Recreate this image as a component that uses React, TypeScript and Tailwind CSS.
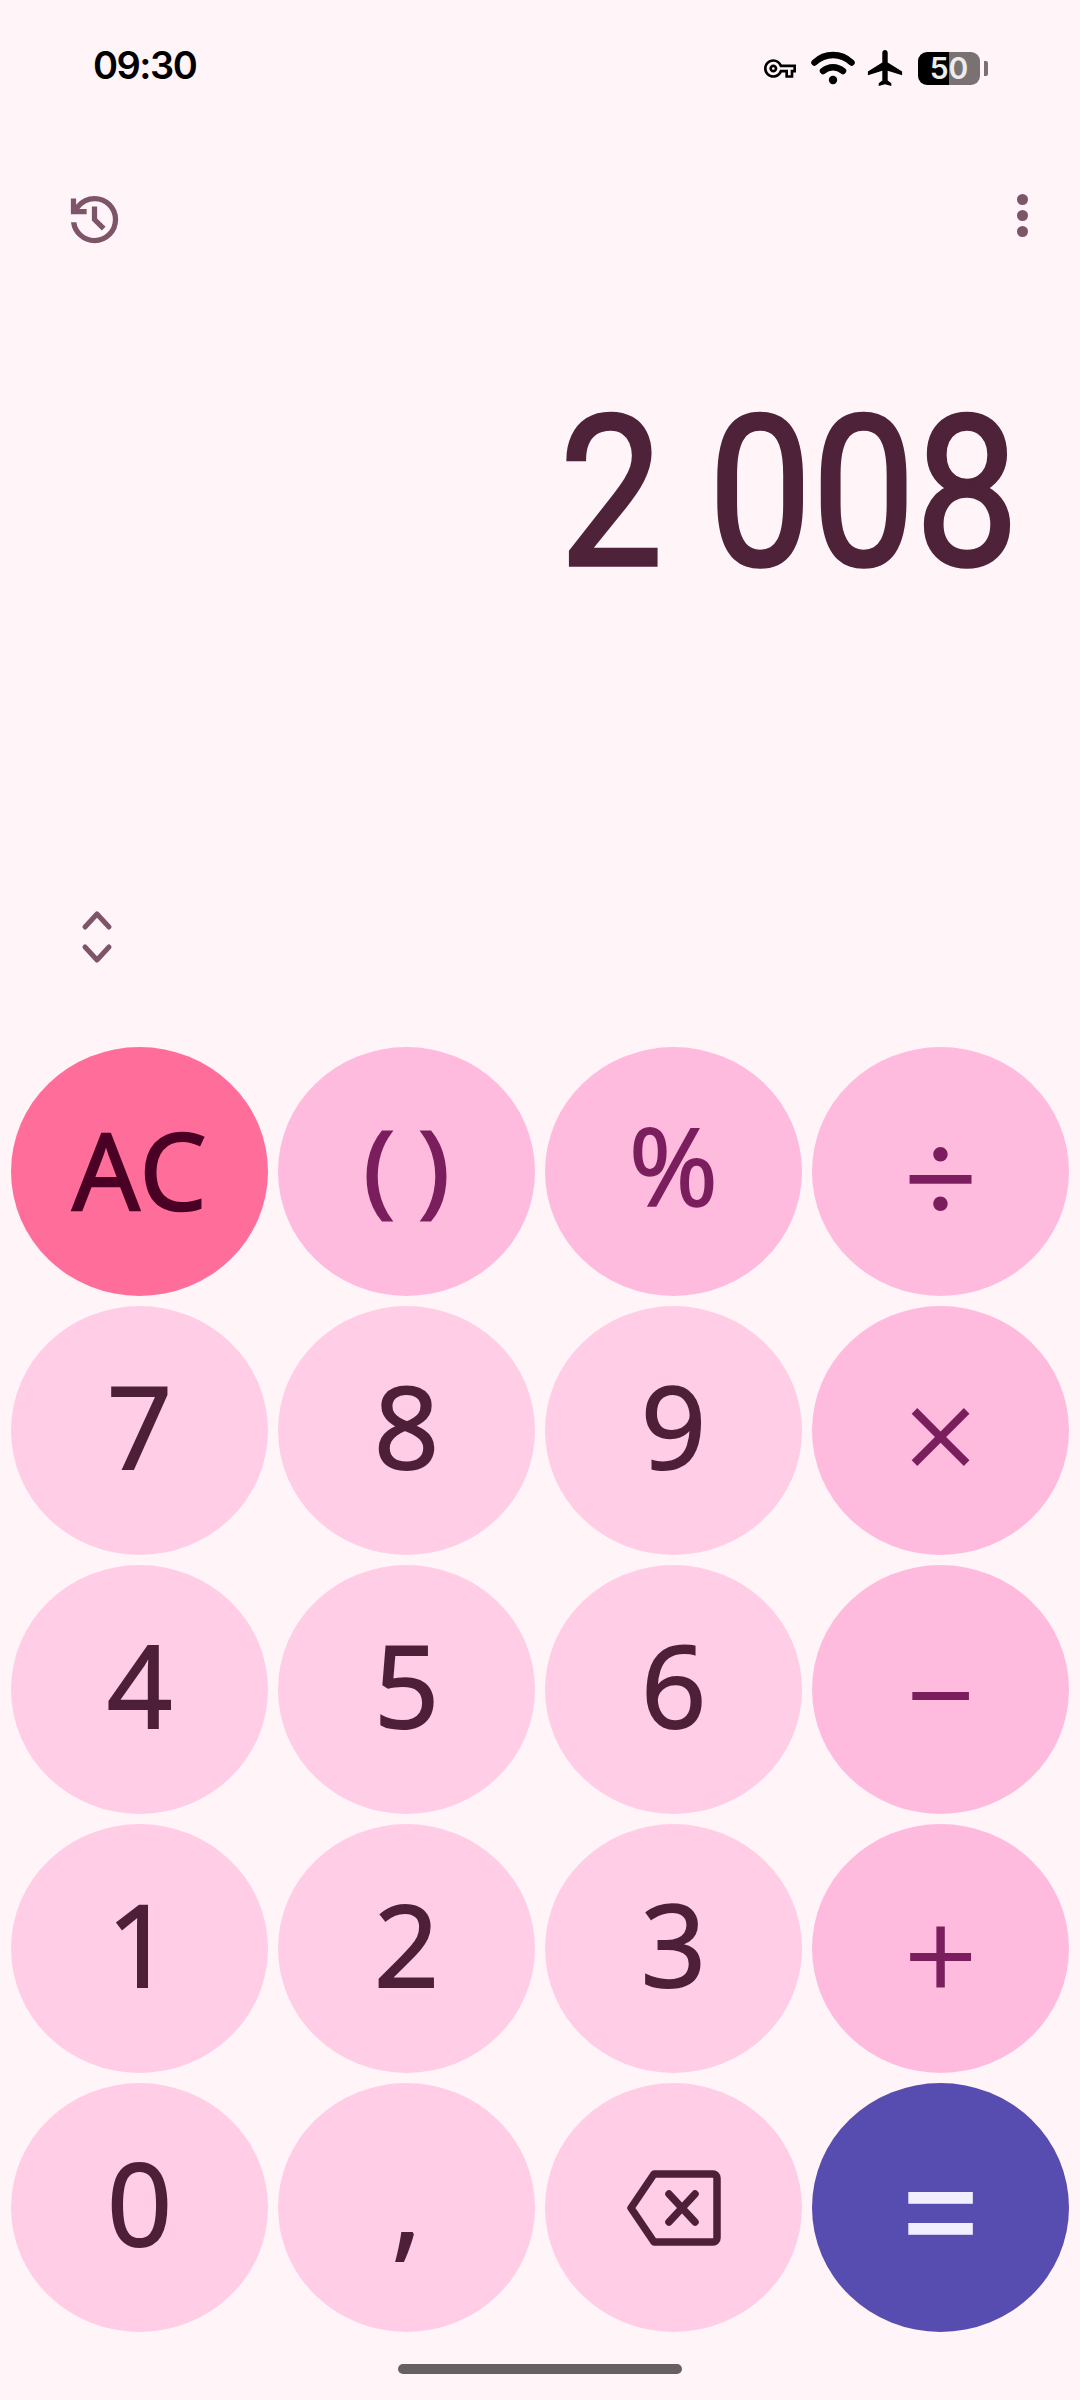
import React from "react";

const digit = "bg-[#FFCEE6] text-[#4E1F38] text-[114px] font-['Open_Sans',sans-serif] pb-[12px] [-webkit-text-stroke:2px_#4E1F38]";
const opBase = "bg-[#FFBBDD] text-[#7B1E5E] font-['Inter',sans-serif] font-[350]";
const sym = "bg-[#FFBBDD] text-[#7B1E5E] font-['Open_Sans',sans-serif] pb-[14px]";

type K = { t: string; c: string };
const keys: K[] = [
  { t: "AC", c: "bg-[#FF6E9B] text-[#4A0024] text-[106px] font-['Open_Sans',sans-serif] pb-[6px] [-webkit-text-stroke:2.5px_#4A0024]" },
  { t: "( )", c: `${sym} text-[100px] [-webkit-text-stroke:3px_#7B1E5E]` },
  { t: "%", c: `${sym} text-[108px] [-webkit-text-stroke:1.5px_#7B1E5E]` },
  { t: "÷", c: `${opBase} text-[140px] pb-[8px]` },
  { t: "7", c: digit },
  { t: "8", c: digit },
  { t: "9", c: digit },
  { t: "×", c: `${opBase} text-[130px] pb-[8px]` },
  { t: "4", c: digit },
  { t: "5", c: digit },
  { t: "6", c: digit },
  { t: "−", c: `${opBase} text-[128px] pb-[8px]` },
  { t: "1", c: digit },
  { t: "2", c: digit },
  { t: "3", c: digit },
  { t: "+", c: `${opBase} text-[135px] pb-[4px]` },
  { t: "0", c: digit },
  { t: ",", c: digit },
  { t: "⌫", c: digit },
  { t: "=", c: "bg-[#574DB0] text-[#F0EEFF] text-[146px] font-['Inter',sans-serif] font-normal pb-[12px]" },
];

function Backspace() {
  return (
    <svg className="mt-[12px]" width="94" height="76" viewBox="0 0 94 76" fill="none" stroke="#4E1F38" strokeWidth="7.5" strokeLinecap="round" strokeLinejoin="round" aria-label="backspace">
      <path d="M27 4H86a4 4 0 0 1 4 4V68a4 4 0 0 1-4 4H27L4 38Z" />
      <path d="M42 24L68 52M68 24L42 52" />
    </svg>
  );
}

export default function App() {
  return (
    <div className="flex h-[2400px] w-[1080px] flex-col overflow-hidden bg-[#FFF4F8] font-['Inter',sans-serif]">
      {/* status bar */}
      <div className="flex h-[187px] items-start justify-between pl-[93px] pr-[92px] pt-[46px]">
        <span className="text-[38px] font-semibold leading-[38px] tracking-[-1.5px] text-black">09:30</span>
        <div className="flex items-center pt-[4px]">
          <svg width="32" height="19" viewBox="0 5 24 14" fill="#000">
            <path d="M22 19h-6v-4h-2.68c-1.14 2.42-3.6 4-6.32 4-3.86 0-7-3.14-7-7s3.14-7 7-7c2.72 0 5.17 1.58 6.32 4H24v6h-2v4zm-4-2h2v-4h2v-2H11.94l-.23-.67C11.01 8.34 9.11 7 7 7c-2.76 0-5 2.24-5 5s2.24 5 5 5c2.11 0 4.01-1.34 4.71-3.33l.23-.67H18v4zM7 15c-1.65 0-3-1.35-3-3s1.35-3 3-3 3 1.35 3 3-1.35 3-3 3zm0-4c-.55 0-1 .45-1 1s.45 1 1 1 1-.45 1-1-.45-1-1-1z" />
          </svg>
          <svg className="ml-[15px]" width="44" height="34" viewBox="0 0 44 34" fill="none" stroke="#000" strokeLinecap="round" strokeWidth="6.5">
            <path d="M3.5 11.5C14 1.5 30 1.5 40.5 11.5" />
            <path d="M12 20C18 15 26 15 32 20" />
            <circle cx="22" cy="29" r="4.2" fill="#000" stroke="none" />
          </svg>
          <svg className="ml-[12px]" width="36" height="36" viewBox="2 2 19 20" fill="#000">
            <path d="M21 16v-2l-8-5V3.5c0-.83-.67-1.5-1.5-1.5S10 2.67 10 3.5V9l-8 5v2l8-2.5V19l-2 1.5V22l3.5-1 3.5 1v-1.5L13 19v-5.5l8 2.5z" />
          </svg>
          <div className="ml-[15px] flex h-[33px] w-[62px] items-center justify-center rounded-[9px] bg-[linear-gradient(90deg,#000_50%,#7A7272_50%)] text-[30px] font-semibold leading-none text-[#EDEDED]">
            50
          </div>
          <div className="ml-[4px] h-[15px] w-[4px] rounded-r-[2px] bg-[#7A7272]" />
        </div>
      </div>

      {/* toolbar */}
      <div className="flex h-[54px] items-center justify-between pl-[63px] pr-[52px] pt-[10px]">
        <svg width="63" height="63" viewBox="0 0 24 24" fill="#7D5468">
          <path d="M12 21q-3.45 0-6.012-2.288T3.05 13H5.1q.35 2.6 2.313 4.3T12 19q2.925 0 4.963-2.038T19 12q0-2.925-2.037-4.963T12 5q-1.725 0-3.225.8T6.25 8H9v2H3V4h2v2.35q1.275-1.6 3.113-2.475T12 3q3.75 0 6.375 2.625T21 12q0 3.75-2.625 6.375T12 21Zm2.8-4.8L11 12.4V7h2v4.6l3.2 3.2-1.4 1.4Z" />
        </svg>
        <div className="mb-[8px] flex flex-col gap-[5px]">
          <div className="h-[11px] w-[11px] rounded-full bg-[#7D5468]" />
          <div className="h-[11px] w-[11px] rounded-full bg-[#7D5468]" />
          <div className="h-[11px] w-[11px] rounded-full bg-[#7D5468]" />
        </div>
      </div>

      {/* display */}
      <div className="flex h-[586px] items-start justify-end pr-[61px] pt-[148px]">
        <span className="origin-right scale-x-[0.88] whitespace-nowrap font-['Roboto',sans-serif] text-[209px] leading-[209px] text-[#4E2238] [-webkit-text-stroke:3.5px_#4E2238]">
          2 008
        </span>
      </div>

      {/* expand */}
      <div className="flex flex-1 items-center pl-[81px]">
        <svg width="32" height="54" viewBox="0 0 32 54" fill="none" stroke="#7D5468" strokeWidth="5" strokeLinecap="round" strokeLinejoin="round">
          <path d="M4 17L16 4L28 17" />
          <path d="M4 37L16 50L28 37" />
        </svg>
      </div>

      {/* keypad */}
      <div className="grid grid-cols-[repeat(4,257px)] grid-rows-[repeat(5,249px)] gap-[10px] px-[11px]">
        {keys.map((k) => (
          <div key={k.t} className={`flex items-center justify-center rounded-[50%] leading-none ${k.c}`}>
            {k.t === "⌫" ? <Backspace /> : k.t}
          </div>
        ))}
      </div>

      {/* gesture bar */}
      <div className="flex h-[68px] shrink-0 items-start justify-center pt-[32px]">
        <div className="h-[10px] w-[284px] rounded-full bg-[#676060]" />
      </div>
    </div>
  );
}
